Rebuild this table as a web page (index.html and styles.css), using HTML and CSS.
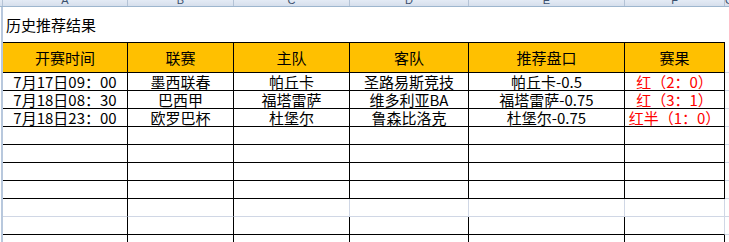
FILE: index.html
```html
<!DOCTYPE html>
<html lang="zh-CN">
<head>
<meta charset="utf-8">
<title>历史推荐结果</title>
<link rel="stylesheet" href="styles.css">
</head>
<body>
<div class="colbar">
  <div class="corner"></div>
  <div class="colhd"><span>A</span></div>
  <div class="colhd"><span>B</span></div>
  <div class="colhd"><span>C</span></div>
  <div class="colhd"><span>D</span></div>
  <div class="colhd"><span>E</span></div>
  <div class="colhd"><span>F</span></div>
  <div class="colhd last"><span>G</span></div>
</div>
<div class="sheet">
  <div class="title">历史推荐结果</div>
  <div class="grid">
    <div class="c hd">开赛时间</div>
    <div class="c hd">联赛</div>
    <div class="c hd">主队</div>
    <div class="c hd">客队</div>
    <div class="c hd">推荐盘口</div>
    <div class="c hd">赛果</div>
    <div class="g"></div>

    <div class="c">7月17日09：00</div>
    <div class="c">墨西联春</div>
    <div class="c">帕丘卡</div>
    <div class="c">圣路易斯竞技</div>
    <div class="c">帕丘卡-0.5</div>
    <div class="c red">红（2：0）</div>
    <div class="g"></div>

    <div class="c">7月18日08：30</div>
    <div class="c">巴西甲</div>
    <div class="c">福塔雷萨</div>
    <div class="c">维多利亚BA</div>
    <div class="c">福塔雷萨-0.75</div>
    <div class="c red">红（3：1）</div>
    <div class="g"></div>

    <div class="c">7月18日23：00</div>
    <div class="c">欧罗巴杯</div>
    <div class="c">杜堡尔</div>
    <div class="c">鲁森比洛克</div>
    <div class="c">杜堡尔-0.75</div>
    <div class="c red">红半（1：0）</div>
    <div class="g"></div>

    <div class="c"></div><div class="c"></div><div class="c"></div><div class="c"></div><div class="c"></div><div class="c"></div><div class="g"></div>
    <div class="c"></div><div class="c"></div><div class="c"></div><div class="c"></div><div class="c"></div><div class="c"></div><div class="g"></div>
    <div class="c"></div><div class="c"></div><div class="c"></div><div class="c"></div><div class="c"></div><div class="c"></div><div class="g"></div>
    <div class="c"></div><div class="c"></div><div class="c"></div><div class="c"></div><div class="c"></div><div class="c"></div><div class="g"></div>

    <div class="c lb"></div><div class="c lb"></div><div class="c lb lr"></div><div class="c lb lr"></div><div class="c lb lr"></div><div class="c lb lr"></div><div class="g"></div>
    <div class="c"></div><div class="c"></div><div class="c"></div><div class="c"></div><div class="c"></div><div class="c lr"></div><div class="g"></div>
    <div class="c"></div><div class="c"></div><div class="c"></div><div class="c"></div><div class="c"></div><div class="c"></div><div class="g"></div>
  </div>
</div>
</body>
</html>
```

FILE: styles.css
```css
* { box-sizing: border-box; }
html, body { margin: 0; padding: 0; background: #fff; }
body {
  width: 729px;
  height: 242px;
  overflow: hidden;
  font-family: "Noto Sans CJK SC", sans-serif;
  font-size: 15px;
  color: #000;
}
.colbar {
  display: grid;
  grid-template-columns: 3px 125px 106px 116px 119px 156px 100px 1fr;
  height: 7px;
  overflow: hidden;
  background: linear-gradient(#E4EBF5, #D6DFEC);
  border-bottom: 1px solid #9EB6CE;
}
.corner { border-right: 1px solid #B4C3D6; }
.colhd {
  border-right: 1px solid #B4C3D6;
  text-align: center;
  overflow: hidden;
  font-family: "Liberation Sans", sans-serif;
  font-size: 11px;
  color: #3A4F6D;
}
.colhd.last { border-right: none; }
.colhd span { display: block; line-height: 12px; margin-top: -6px; }
.sheet {
  margin-left: 1px;
  border-left: 2px solid #B8C8DD;
  height: 235px;
}
.title {
  height: 35px;
  line-height: 35px;
  padding-left: 3px;
}
.grid {
  display: grid;
  grid-template-columns: 125px 106px 116px 119px 156px 100px 1fr;
  grid-template-rows: 31px repeat(10, 18px);
}
.c {
  border-right: 1px solid #000;
  border-bottom: 1px solid #000;
  text-align: center;
  line-height: 17px;
  white-space: nowrap;
}
.hd {
  background: #FFC000;
  border-top: 1px solid #000;
  line-height: 29px;
}
.g { border-bottom: 1px solid #D0D7E5; }
.lr { border-right-color: #D0D7E5; }
.lb { border-bottom-color: #D0D7E5; }
.red { color: #FF0000; }
```
